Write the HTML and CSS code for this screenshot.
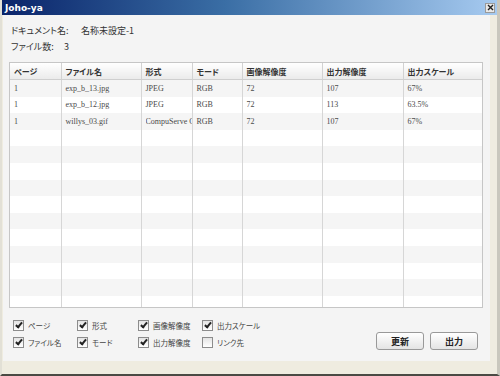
FILE: index.html
```html
<!DOCTYPE html>
<html lang="ja">
  <head>
    <meta charset="UTF-8" />
    <title>Joho-ya</title>
    <link rel="stylesheet" href="styles.css">
  </head>
  <body>
    <div class="window">
      <div class="titlebar">
        <span class="title">Joho-ya</span>
        <span class="close">
          <svg width="7" height="7" viewBox="0 0 7 7"><path d="M1 1L6 6M6 1L1 6" stroke="#222" stroke-width="1.4"/></svg>
        </span>
      </div>
      <div class="frame">
        <div class="content">
          <div class="info">
            <div class="info-row"><span class="label">ドキュメント名:</span><span>名称未設定-1</span></div>
            <div class="info-row"><span class="label short">ファイル数:</span><span>3</span></div>
          </div>

          <div class="grid">
            <table>
              <colgroup>
                <col style="width: 51px">
                <col style="width: 80px">
                <col style="width: 51px">
                <col style="width: 50px">
                <col style="width: 80px">
                <col style="width: 81px">
                <col style="width: 80px">
              </colgroup>
              <thead>
                <tr>
                  <th>ページ</th>
                  <th>ファイル名</th>
                  <th>形式</th>
                  <th>モード</th>
                  <th>画像解像度</th>
                  <th>出力解像度</th>
                  <th>出力スケール</th>
                </tr>
              </thead>
              <tbody>
                <tr><td>1</td><td>exp_b_13.jpg</td><td>JPEG</td><td>RGB</td><td>72</td><td>107</td><td>67%</td></tr>
                <tr><td>1</td><td>exp_b_12.jpg</td><td>JPEG</td><td>RGB</td><td>72</td><td>113</td><td>63.5%</td></tr>
                <tr><td>1</td><td>willys_03.gif</td><td><div class="clip">CompuServe GIF</div></td><td>RGB</td><td>72</td><td>107</td><td>67%</td></tr>
                <tr><td></td><td></td><td></td><td></td><td></td><td></td><td></td></tr>
                <tr><td></td><td></td><td></td><td></td><td></td><td></td><td></td></tr>
                <tr><td></td><td></td><td></td><td></td><td></td><td></td><td></td></tr>
                <tr><td></td><td></td><td></td><td></td><td></td><td></td><td></td></tr>
                <tr><td></td><td></td><td></td><td></td><td></td><td></td><td></td></tr>
                <tr><td></td><td></td><td></td><td></td><td></td><td></td><td></td></tr>
                <tr><td></td><td></td><td></td><td></td><td></td><td></td><td></td></tr>
                <tr><td></td><td></td><td></td><td></td><td></td><td></td><td></td></tr>
                <tr><td></td><td></td><td></td><td></td><td></td><td></td><td></td></tr>
                <tr><td></td><td></td><td></td><td></td><td></td><td></td><td></td></tr>
                <tr><td></td><td></td><td></td><td></td><td></td><td></td><td></td></tr>
              </tbody>
            </table>
          </div>

          <div class="footer">
            <div class="checks">
              <label class="check"><span class="box on"></span>ページ</label>
              <label class="check"><span class="box on"></span>形式</label>
              <label class="check"><span class="box on"></span>画像解像度</label>
              <label class="check"><span class="box on"></span>出力スケール</label>
              <label class="check"><span class="box on"></span>ファイル名</label>
              <label class="check"><span class="box on"></span>モード</label>
              <label class="check"><span class="box on"></span>出力解像度</label>
              <label class="check"><span class="box"></span>リンク先</label>
            </div>
            <div class="buttons">
              <button>更新</button>
              <button>出力</button>
            </div>
          </div>
        </div>
      </div>
    </div>
  </body>
</html>
```

FILE: styles.css
```css
body {
  margin: 0;
  font-family: "Noto Sans CJK JP", "Liberation Sans", sans-serif;
  font-feature-settings: "palt";
  background-color: #ece9d8;
}
.window {
  width: 500px;
  height: 376px;
  box-sizing: border-box;
  background-color: #efece0;
  border-left: 2px solid #e2e0d6;
  border-right: 3px solid #c9c7bd;
  border-bottom: 2px solid #4a4a44;
  display: flex;
  flex-direction: column;
}
.titlebar {
  height: 15px;
  display: flex;
  align-items: center;
  justify-content: space-between;
  background: linear-gradient(to right, #0a246a 0%, #3a6ea5 45%, #a6caf0 100%);
  padding: 0 2px 0 3px;
}
.title {
  color: #fff;
  font-family: "DejaVu Sans", sans-serif;
  font-weight: bold;
  font-size: 9px;
}
.close {
  width: 8px;
  height: 8px;
  background-color: #e8e8e8;
  border: 1px solid #9a9a9a;
  display: flex;
  align-items: center;
  justify-content: center;
}
.frame {
  flex: 1;
  display: flex;
  padding: 0 7px 13px 1px;
}
.content {
  flex: 1;
  background-color: #f4f4f4;
  display: flex;
  flex-direction: column;
  font-size: 9px;
  color: #333;
}
.info {
  padding: 8px 0 0 8px;
}
.info-row {
  height: 16px;
  line-height: 16px;
  display: flex;
  white-space: nowrap;
}
.label {
  width: 70px;
  flex-shrink: 0;
}
.label.short {
  width: 53px;
}
.grid {
  margin: 7px 0 0 6px;
  width: 474px;
  height: 246px;
  box-sizing: border-box;
  border: 1px solid #c6c6c6;
  background-color: #fff;
  overflow: hidden;
}
table {
  border-collapse: collapse;
  table-layout: fixed;
  width: 473px;
}
th {
  height: 16px;
  text-align: left;
  font-size: 8px;
  font-weight: bold;
  color: #333;
  padding: 0 0 0 4px;
  background: linear-gradient(#ffffff, #ebebeb);
  border-bottom: 1px solid #cfcfcf;
  border-right: 1px solid #d2d2d2;
}
td {
  height: 16.6px;
  padding: 0 0 0 4px;
  font-family: "Liberation Serif", serif;
  font-size: 8px;
  color: #4a4a4a;
  white-space: nowrap;
  overflow: hidden;
  border-right: 1px solid #d6d6d6;
}
.clip {
  width: 46px;
  overflow: hidden;
}
tbody tr:nth-child(odd) td {
  background-color: #f5f5f5;
}
th:last-child,
td:last-child {
  border-right: none;
}
.footer {
  display: flex;
  justify-content: space-between;
  padding: 9px 12px 0 10px;
}
.checks {
  display: grid;
  grid-template-columns: 64px 61px 64px 80px;
  grid-auto-rows: 17px;
}
.check {
  display: flex;
  align-items: center;
  font-size: 7.5px;
  color: #444;
  white-space: nowrap;
}
.box {
  width: 9px;
  height: 9px;
  flex-shrink: 0;
  border: 1px solid #8c8c8c;
  background: linear-gradient(#e4e4e4, #ffffff);
  margin-right: 4px;
  position: relative;
}
.box.on::after {
  content: "";
  position: absolute;
  left: 3px;
  top: 0px;
  width: 2px;
  height: 5px;
  border: solid #222;
  border-width: 0 2px 2px 0;
  transform: rotate(40deg);
}
.buttons {
  display: flex;
  gap: 6px;
  margin-top: 15px;
}
button {
  width: 48px;
  height: 18px;
  padding: 0;
  font-family: "Noto Sans CJK JP", sans-serif;
  font-size: 9px;
  font-weight: bold;
  color: #222;
  border: 1px solid #999;
  border-radius: 3px;
  background: linear-gradient(#ffffff, #e4e4e4);
}
```
